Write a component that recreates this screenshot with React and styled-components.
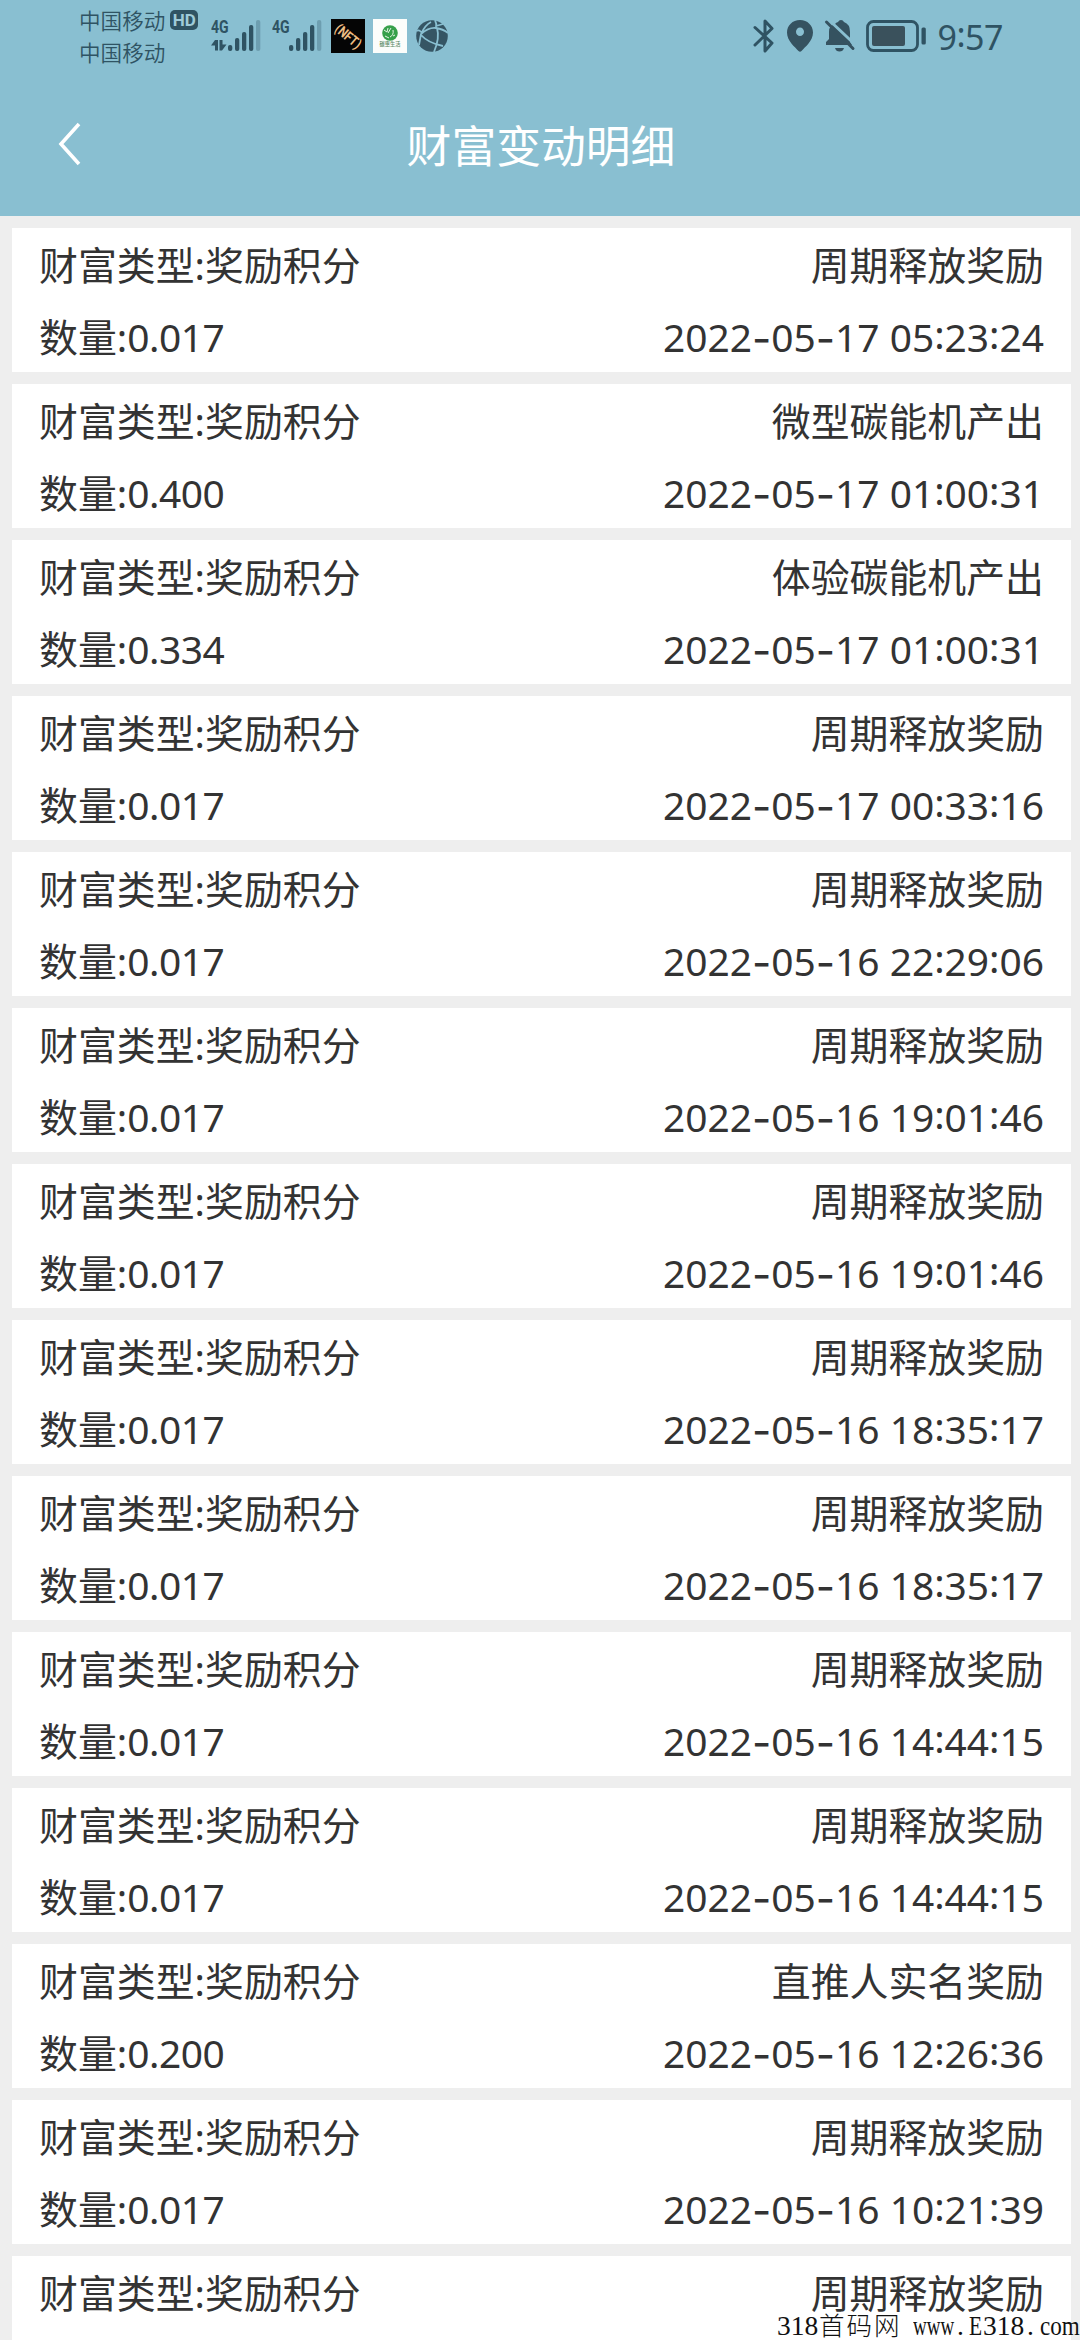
import React from "react";
import styled, { createGlobalStyle } from "styled-components";

const INK = "#2f5363";

const GlobalStyle = createGlobalStyle`
  html, body { margin: 0; padding: 0; background: #eeeeee; }
  * { box-sizing: border-box; }
`;

const Screen = styled.div`
  position: relative;
  width: 1080px;
  height: 2340px;
  overflow: hidden;
  background: #eeeeee;
  color: #333333;
  font-family: "Noto Sans", "Noto Sans CJK SC", sans-serif;
`;

const Header = styled.header`
  height: 216px;
  background: #89bfd1;
`;

const StatusBar = styled.div`
  display: flex;
  justify-content: space-between;
  align-items: flex-start;
  height: 72px;
  padding: 0 77px 0 79px;
  color: ${INK};
`;

const StatusGroup = styled.div`
  display: flex;
  align-items: center;
  height: 72px;
`;

const Carriers = styled.div`
  display: flex;
  flex-direction: column;
  width: 132px;
  font-family: "Noto Sans CJK SC", sans-serif;
  font-weight: 350;
  font-size: 21.6px;
  line-height: 32px;
`;

const Carrier = styled.div`
  display: flex;
  align-items: center;
  gap: 5px;
  height: 32px;
  white-space: nowrap;
`;

const HdBadge = styled.span`
  width: 28px;
  height: 20px;
  border-radius: 5px;
  background: ${INK};
  color: #9fcbd9;
  font: 700 17px/20px Roboto, sans-serif;
  text-align: center;
`;

const Signal = styled.div`
  display: flex;
  align-items: flex-start;
  width: ${(p) => p.$width}px;
  height: 32px;
`;

const SignalSide = styled.div`
  display: flex;
  flex-direction: column;
  width: 17px;
  height: 32px;
`;

const Network = styled.span`
  height: 19px;
  transform: scaleX(0.76);
  transform-origin: left center;
  font: 700 18.5px/15px Roboto, sans-serif;
`;

const Drawing = styled.svg`
  display: block;
  flex: none;
  overflow: visible;
  margin-left: ${(p) => p.$left || 0}px;
`;

const AppTile = styled.div`
  display: flex;
  flex-direction: column;
  align-items: center;
  justify-content: center;
  width: 34px;
  height: 34px;
  margin-right: 8px;
  overflow: hidden;
  background: ${(p) => p.$bg};
`;

const NftWord = styled.span`
  color: #edbd83;
  font: 700 14px/15px Roboto, sans-serif;
  transform: rotate(40deg) scaleX(0.82);
  white-space: nowrap;
`;

const TinyName = styled.span`
  color: #5b8a66;
  font: 500 5.2px/6px "Noto Sans CJK SC", sans-serif;
  white-space: nowrap;
`;

const Clock = styled.span`
  margin-left: 12px;
  font-size: 34px;
  line-height: 72px;
  height: 70px;
  letter-spacing: -0.5px;
`;

const ClockColon = styled.span`
  vertical-align: 3px;
  line-height: 1;
`;

const NavBar = styled.div`
  display: grid;
  grid-template-columns: 201px 1fr 199px;
  align-items: center;
  height: 144px;
`;

const BackButton = styled.button`
  display: flex;
  align-items: center;
  width: 100px;
  height: 88px;
  padding: 0 0 0 59px;
  border: 0;
  background: none;
`;

const Title = styled.h1`
  margin: 0;
  color: #ffffff;
  font: 400 44.8px/66px "Noto Sans CJK SC", sans-serif;
  text-align: center;
`;

const List = styled.main`
  display: flex;
  flex-direction: column;
  gap: 12px;
  padding: 12px 9px 0 12px;
`;

const Card = styled.section`
  display: flex;
  flex-direction: column;
  flex: none;
  height: 144px;
  padding: 0 27px;
  background: #ffffff;
`;

const Row = styled.div`
  display: flex;
  justify-content: space-between;
  height: 72px;
  font-size: 38.9px;
  line-height: 74px;
  white-space: nowrap;
`;

const Amount = styled.span`
  letter-spacing: -0.5px;
`;

const Hyphen = styled.span`
  font-family: Inter, sans-serif;
  font-size: 42px;
  font-weight: 400;
  vertical-align: -2px;
  line-height: 1;
`;

const Colon = styled.span`
  vertical-align: 3px;
  line-height: 1;
`;

const Watermark = styled.footer`
  position: absolute;
  right: 0;
  bottom: 3px;
  display: flex;
  align-items: baseline;
  width: 303px;
  height: 26px;
  color: #111111;
  font-family: "Liberation Serif", "Noto Sans CJK SC", serif;
  font-size: 27.5px;
  line-height: 26px;
`;

const Piece = styled.span`
  flex: none;
  width: ${(p) => p.$width}px;
  transform: scaleX(${(p) => p.$scale || 1});
  transform-origin: left center;
  font-weight: ${(p) => (p.$thin ? 300 : 400)};
  ${(p) => p.$thin && 'font-family: "Noto Sans CJK SC", sans-serif; font-size: 25.5px; letter-spacing: 2px;'}
  white-space: pre;
`;

const BARS = [
  { x: 0, y: 25, o: 1 },
  { x: 7, y: 18, o: 1 },
  { x: 14, y: 12, o: 1 },
  { x: 21, y: 5, o: 1 },
  { x: 28, y: 0, o: 0.3 },
];

function SignalMeter({ data, width }) {
  return (
    <Signal $width={width}>
      <SignalSide>
        <Network>4G</Network>
        {data && (
          <Drawing width="16" height="12" viewBox="0 0 16 12" fill={INK}>
            <path d="M4 1h3v10.500H4V6.500H0z" />
            <path d="M8.500 1h3v4.500H15.500L11 11.500H8.500z" />
          </Drawing>
        )}
      </SignalSide>
      <Drawing width="33" height="31" viewBox="0 0 33 31" fill={INK}>
        {BARS.map((b) => (
          <rect key={b.x} x={b.x} y={b.y} width="4.300" height={31 - b.y} rx="2" opacity={b.o} />
        ))}
      </Drawing>
    </Signal>
  );
}

const RECORDS = [
  ["0.017", "周期释放奖励", "2022-05-17 05:23:24"],
  ["0.400", "微型碳能机产出", "2022-05-17 01:00:31"],
  ["0.334", "体验碳能机产出", "2022-05-17 01:00:31"],
  ["0.017", "周期释放奖励", "2022-05-17 00:33:16"],
  ["0.017", "周期释放奖励", "2022-05-16 22:29:06"],
  ["0.017", "周期释放奖励", "2022-05-16 19:01:46"],
  ["0.017", "周期释放奖励", "2022-05-16 19:01:46"],
  ["0.017", "周期释放奖励", "2022-05-16 18:35:17"],
  ["0.017", "周期释放奖励", "2022-05-16 18:35:17"],
  ["0.017", "周期释放奖励", "2022-05-16 14:44:15"],
  ["0.017", "周期释放奖励", "2022-05-16 14:44:15"],
  ["0.200", "直推人实名奖励", "2022-05-16 12:26:36"],
  ["0.017", "周期释放奖励", "2022-05-16 10:21:39"],
  ["0.017", "周期释放奖励", null],
];

function Timestamp({ value }) {
  return (
    <span>
      {value.split(/([-:])/).map((part, i) => {
        if (part === "-") return <Hyphen key={i}>-</Hyphen>;
        if (part === ":") return <Colon key={i}>:</Colon>;
        return part;
      })}
    </span>
  );
}

export default function App() {
  return (
    <Screen>
      <GlobalStyle />
      <Header>
        <StatusBar>
          <StatusGroup>
            <Carriers>
              <Carrier>中国移动<HdBadge>HD</HdBadge></Carrier>
              <Carrier>中国移动</Carrier>
            </Carriers>
            <SignalMeter data width={61} />
            <SignalMeter width={59} />
            <AppTile $bg="#050505"><NftWord>(NFT)</NftWord></AppTile>
            <AppTile $bg="#fbfdfb">
              <Drawing width="16" height="16" viewBox="0 0 16 16">
                <circle cx="8" cy="8" r="7.800" fill="#36a04a" />
                <path d="M2 5l3 2 1-4M6 8l3-5M8 12q4-2 3-7M3 11l4 2M11 11l2-1" fill="none" stroke="#e6f4e6" strokeWidth="1" />
              </Drawing>
              <TinyName>碳惠生活</TinyName>
            </AppTile>
            <Drawing $left={1} width="32" height="32" viewBox="0 0 32 32">
              <circle cx="16" cy="16" r="15.800" fill="#355564" />
              <path
                d="M19 0Q21 4 20 8M1 11Q3 9 6 13M5 14Q13 7 20 8T32 13M5 15Q12 23 27 26M21 8Q24 18 18 32M15 2Q9 5 5 14L3 25M20 6L27 4"
                fill="none" stroke="#89bfd1" strokeWidth="1.800"
              />
            </Drawing>
          </StatusGroup>
          <StatusGroup>
            <Drawing width="22" height="34" viewBox="0 0 22 34" fill="none" stroke={INK} strokeWidth="3" strokeLinejoin="round" strokeLinecap="round">
              <path d="M2 8.500l17 15.500-7 8V2l7 7.500L2 26" />
            </Drawing>
            <Drawing $left={12} width="26" height="32" viewBox="0 0 26 32">
              <path fillRule="evenodd" fill="#355260" d="M13 0C5.500 0 0 5.500 0 12.500 0 21 8 27 11.500 31q1.500 1.500 3 0C18 27 26 21 26 12.500 26 5.500 20.500 0 13 0zm0 7.500a4 4.300 0 1 1 0 8.600 4 4.300 0 0 1 0-8.600z" />
            </Drawing>
            <Drawing $left={12} width="30" height="32" viewBox="0 0 30 32">
              <path fill="#355260" d="M10 4q1-1.500 3-2 1-2 3-2t3 2q6 2 6 10v10l2 3H1v-3l3-3v-7q0-4 2-6zM10 28h9q-1 3.500-4.500 3.500T10 28z" />
              <path d="M4 0L30 24.500" stroke="#89bfd1" strokeWidth="3" />
              <path d="M1.500 2L28 28.500" stroke="#355260" strokeWidth="3" strokeLinecap="round" />
            </Drawing>
            <Drawing $left={11} width="60" height="32" viewBox="0 0 60 32">
              <rect x="1.500" y="1.500" width="50" height="29" rx="6" fill="none" stroke={INK} strokeWidth="2.800" />
              <rect x="6" y="6" width="33" height="20" rx="2" fill="#3a515c" />
              <rect x="55.500" y="7.500" width="4.300" height="17" rx="1.500" fill={INK} />
            </Drawing>
            <Clock>9<ClockColon>:</ClockColon>57</Clock>
          </StatusGroup>
        </StatusBar>
        <NavBar>
          <BackButton aria-label="返回">
            <Drawing width="22" height="42" viewBox="0 0 22 42" fill="none" stroke="#ffffff" strokeWidth="3.600">
              <path d="M20 1L2 21l18 20" />
            </Drawing>
          </BackButton>
          <Title>财富变动明细</Title>
        </NavBar>
      </Header>
      <List>
        {RECORDS.map(([amount, source, time], i) => (
          <Card key={i}>
            <Row>
              <span>财富类型:奖励积分</span>
              <span>{source}</span>
            </Row>
            {time && (
              <Row>
                <span>数量:<Amount>{amount}</Amount></span>
                <Timestamp value={time} />
              </Row>
            )}
          </Card>
        ))}
      </List>
      <Watermark>
        <Piece $width={42}>318</Piece>
        <Piece $width={94} $thin>首码网</Piece>
        <Piece $width={44} $scale={0.69}>www</Piece>
        <Piece $width={12}>.</Piece>
        <Piece $width={14} $scale={0.78}>E</Piece>
        <Piece $width={44}>318</Piece>
        <Piece $width={13}>.</Piece>
        <Piece $width={40} $scale={0.84}>com</Piece>
      </Watermark>
    </Screen>
  );
}
